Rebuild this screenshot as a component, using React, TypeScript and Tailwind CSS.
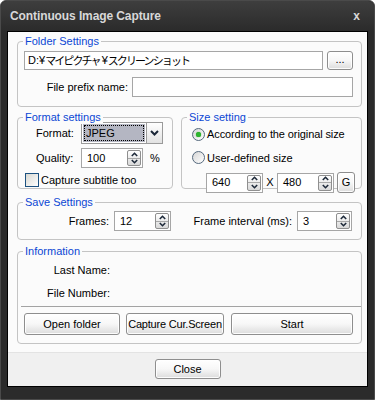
import React from "react";

const Group = ({ legend, className = "", children }: { legend: string; className?: string; children?: React.ReactNode }) => (
  <div className={`relative border border-[#c4c4c4] rounded-[4px] ${className}`}>
    <span className="absolute left-[5px] top-[-8px] bg-[#fbfbfb] px-[2px] leading-[14px] text-[11px] text-[#0b47d4]">{legend}</span>
    {children}
  </div>
);

const Btn = ({ children, className = "" }: { children?: React.ReactNode; className?: string }) => (
  <div
    className={`flex items-center justify-center rounded-[3px] border border-[#8e8e8e] bg-gradient-to-b from-white via-[#f7f7f7] to-[#dcdcdc] text-[11px] text-black shadow-[inset_0_0_0_1px_rgba(255,255,255,0.9)] ${className}`}
  >
    {children}
  </div>
);

const Arrow = ({ up }: { up?: boolean }) => (
  <svg width="7" height="5" viewBox="0 0 7 5">
    <polyline
      points={up ? "0.8,4 3.5,1.3 6.2,4" : "0.8,1 3.5,3.7 6.2,1"}
      fill="none"
      stroke="#1e2a3a"
      strokeWidth="1.6"
    />
  </svg>
);

const Spinner = () => (
  <div className="flex h-[16px] w-[14px] flex-col rounded-[2px] border border-[#8f8f8f] bg-gradient-to-b from-white to-[#d9d9d9]">
    <div className="flex flex-1 items-center justify-center border-b border-[#a8a8a8]">
      <Arrow up />
    </div>
    <div className="flex flex-1 items-center justify-center">
      <Arrow />
    </div>
  </div>
);

const NumInput = ({ value, className = "" }: { value: string; className?: string }) => (
  <div className={`flex h-[20px] items-center justify-between border border-[#a6a6a6] bg-white pl-[5px] pr-[1px] text-[11px] text-black ${className}`}>
    <span>{value}</span>
    <Spinner />
  </div>
);

const Radio = ({ checked }: { checked?: boolean }) => (
  <div className="flex h-[13px] w-[13px] items-center justify-center rounded-full border border-[#55697d] bg-gradient-to-br from-[#d6d6d6] to-white">
    {checked && <div className="h-[5px] w-[5px] rounded-full bg-[#2db52d] shadow-[0_0_1px_#1a8f1a]" />}
  </div>
);

export default function App() {
  return (
    <div className="h-[400px] w-[375px] bg-white font-['Liberation_Sans',Arial,sans-serif] text-[11px] text-black">
      <div className="flex h-[400px] w-[375px] flex-col rounded-t-[6px] border border-[#4a4a4a] bg-[#2b2b2b]">
        {/* title bar */}
        <div className="flex h-[30px] items-center justify-between rounded-t-[6px] bg-gradient-to-b from-[#3e3e3e] to-[#2b2b2b] pl-[9px] pr-[14px]">
          <span className="text-[12px] font-bold tracking-[-0.1px] text-[#d8d8d8]">Continuous Image Capture</span>
          <span className="pb-[1px] text-[12px] font-bold leading-none text-[#d8d8d8]">x</span>
        </div>
        {/* content */}
        <div className="mx-[6px] flex h-[356px] flex-col border border-black">
          <div className="flex h-[320px] flex-col bg-[#fbfbfb] pl-[9px] pr-[5px]">
            {/* Folder settings */}
            <Group legend="Folder Settings" className="mt-[9px] h-[66px]">
              <div className="flex pl-[6px] pt-[9px]">
                <div className="flex h-[19px] w-[299px] items-center whitespace-nowrap border border-[#a6a6a6] bg-white pl-[3px] text-[11px]">
                  <span>D:¥</span>
                  <span className="font-['Noto_Sans_CJK_JP',sans-serif] tracking-[-1.9px]">マイピクチャ</span>
                  <span className="ml-[2px]">¥</span>
                  <span className="font-['Noto_Sans_CJK_JP',sans-serif] tracking-[-1.9px]">スクリーンショット</span>
                </div>
                <Btn className="ml-[4px] h-[19px] w-[26px] pb-[2px] text-[11px]">...</Btn>
              </div>
              <div className="mt-[7px] flex items-center justify-end pr-[8px]">
                <span className="mr-[4px]">File prefix name:</span>
                <div className="h-[20px] w-[221px] border border-[#a6a6a6] bg-white" />
              </div>
            </Group>
            {/* Format + Size */}
            <div className="mt-[10px] flex gap-[8px]">
              <Group legend="Format settings" className="h-[72px] w-[156px]">
                <div className="flex items-center pl-[18px] pt-[4px]">
                  <span className="w-[45px]">Format:</span>
                  <div className="flex h-[22px] w-[82px] border border-[#9a9a9a] bg-white">
                    <div className="m-[1px] flex flex-1 items-center bg-[#b4b6c2]">
                      <div className="mx-[1px] flex h-[16px] flex-1 items-center border border-dotted border-black pl-[1px]">JPEG</div>
                    </div>
                    <div className="flex w-[16px] items-center justify-center border-l border-[#9a9a9a] bg-gradient-to-b from-white to-[#e2e2e2]">
                      <svg width="9" height="6" viewBox="0 0 9 6">
                        <polyline points="1,1 4.5,4.5 8,1" fill="none" stroke="#1b2738" strokeWidth="2" />
                      </svg>
                    </div>
                  </div>
                </div>
                <div className="mt-[4px] flex items-center pl-[18px]">
                  <span className="w-[45px]">Quality:</span>
                  <NumInput value="100" className="w-[62px]" />
                  <span className="ml-[7px]">%</span>
                </div>
                <div className="mt-[4px] flex items-center pl-[7px]">
                  <div className="h-[14px] w-[14px] border border-[#1c5180] bg-gradient-to-br from-[#d8d8d2] to-white" />
                  <span className="ml-[2px]">Capture subtitle too</span>
                </div>
              </Group>
              <Group legend="Size setting" className="h-[72px] w-[181px]">
                <div className="flex items-center pl-[10px] pt-[8px]">
                  <Radio checked />
                  <span className="ml-[2px] whitespace-nowrap tracking-[-0.1px]">According to the original size</span>
                </div>
                <div className="mt-[7px] flex items-center pl-[10px]">
                  <Radio />
                  <span className="ml-[2px]">User-defined size</span>
                </div>
                <div className="mt-[6px] flex items-center pl-[24px]">
                  <NumInput value="640" className="w-[57px]" />
                  <span className="w-[14px] text-center">X</span>
                  <NumInput value="480" className="w-[57px]" />
                  <Btn className="ml-[3px] h-[21px] w-[18px]">G</Btn>
                </div>
              </Group>
            </div>
            {/* Save settings */}
            <Group legend="Save Settings" className="mt-[13px] h-[38px]">
              <div className="flex h-full items-center">
                <span className="w-[91px] text-right">Frames:</span>
                <NumInput value="12" className="ml-[5px] w-[57px]" />
                <span className="ml-[20px] w-[101px] whitespace-nowrap text-right">Frame interval (ms):</span>
                <NumInput value="3" className="ml-[5px] w-[55px]" />
              </div>
            </Group>
            {/* Information */}
            <Group legend="Information" className="mt-[11px] h-[93px]">
              <div className="flex flex-col pt-[10px]">
                <span className="h-[16px] w-[92px] text-right leading-[16px]">Last Name:</span>
                <span className="mt-[7px] h-[16px] w-[92px] text-right leading-[16px]">File Number:</span>
                <div className="ml-[3px] mt-[5px] h-px bg-[#a3a3a3]" />
                <div className="mt-[6px] flex pl-[6px]">
                  <Btn className="h-[22px] w-[96px]">Open folder</Btn>
                  <Btn className="ml-[6px] h-[22px] w-[98px] whitespace-nowrap tracking-[-0.2px]">Capture Cur.Screen</Btn>
                  <Btn className="ml-[7px] h-[22px] w-[122px]">Start</Btn>
                </div>
              </div>
            </Group>
          </div>
          {/* footer */}
          <div className="flex flex-1 justify-center border-t border-[#e3e3e3] bg-[#f0f0f0] pt-[6px]">
            <Btn className="h-[20px] w-[66px]">Close</Btn>
          </div>
        </div>
      </div>
    </div>
  );
}
